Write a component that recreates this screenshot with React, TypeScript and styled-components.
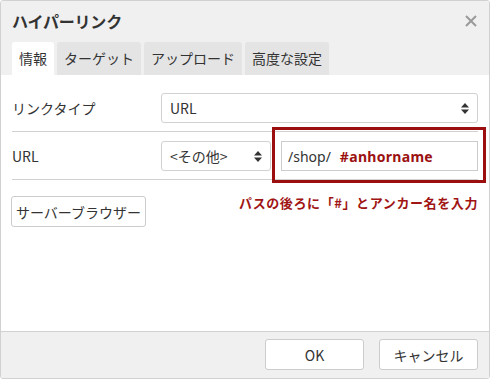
import React from 'react';
import styled, { createGlobalStyle } from 'styled-components';

const GlobalStyle = createGlobalStyle`
  html, body {
    margin: 0;
    padding: 0;
    background: #ffffff;
  }
  body {
    font-family: 'Noto Sans CJK JP', 'Noto Sans', sans-serif;
    color: #333333;
  }
`;

const Dialog = styled.div`
  width: 490px;
  height: 379px;
  box-sizing: border-box;
  border: 1px solid #d1d1d1;
  border-radius: 3px;
  display: flex;
  flex-direction: column;
  overflow: hidden;
  background: #ffffff;
`;

const Header = styled.div`
  background: #f0f0f0;
  display: flex;
  flex-direction: column;
`;

const TitleRow = styled.div`
  height: 41px;
  display: flex;
  align-items: center;
  justify-content: space-between;
  padding: 0 11px 0 11px;
`;

const Title = styled.div`
  font-size: 16px;
  font-weight: 700;
  color: #333333;
  letter-spacing: -0.2px;
  margin-top: -2px;
`;

const Close = styled.div`
  width: 14px;
  height: 14px;
  margin-top: -2px;
  display: flex;
`;

const Tabs = styled.div`
  display: flex;
  gap: 3px;
  padding: 0 11px;
  height: 33px;
  align-items: flex-end;
`;

const Tab = styled.div<{ $active?: boolean }>`
  height: 33px;
  box-sizing: border-box;
  padding: 0 7px 1px 7px;
  display: flex;
  align-items: center;
  font-size: 14px;
  color: #333333;
  background: ${(p) => (p.$active ? '#ffffff' : '#e4e4e4')};
  border-radius: 3px 3px 0 0;
`;

const Body = styled.div`
  flex: 1;
  position: relative;
  padding: 18px 11px 0 11px;
`;

const Row = styled.div<{ $line?: boolean }>`
  display: grid;
  grid-template-columns: 149px 1fr;
  align-items: center;
  padding: 0 0 8px 0;
  margin-bottom: 9px;
  border-bottom: ${(p) => (p.$line ? '1px solid #d1d1d1' : 'none')};
`;

const Label = styled.div`
  font-size: 14px;
  color: #333333;
`;

const Controls = styled.div`
  display: flex;
  gap: 10px;
  align-items: center;
`;

const Select = styled.div<{ $w?: number }>`
  height: 30px;
  box-sizing: border-box;
  ${(p) => (p.$w ? `width: ${p.$w}px;` : 'flex: 1;')}
  border: 1px solid #d1d1d1;
  border-radius: 3px;
  display: flex;
  align-items: center;
  justify-content: space-between;
  padding: 0 8px 0 8px;
  font-size: 14px;
  color: #333333;
  background: #ffffff;
`;

const Arrows = styled.svg`
  width: 8px;
  height: 11px;
`;

const TextInput = styled.div`
  flex: 1;
  height: 30px;
  box-sizing: border-box;
  border: 1px solid #cccccc;
  display: flex;
  align-items: center;
  padding: 0 6px;
  font-size: 14px;
  color: #333333;
  font-family: 'Noto Sans', 'Open Sans', sans-serif;
`;

const Anchor = styled.span`
  color: #9b1111;
  font-weight: 700;
  margin-left: 9px;
  letter-spacing: 0.3px;
`;

const Highlight = styled.div`
  position: absolute;
  left: 271px;
  top: 52px;
  width: 214px;
  height: 56px;
  box-sizing: border-box;
  border: 3px solid #9b0f0f;
  pointer-events: none;
`;

const BottomRow = styled.div`
  display: flex;
  justify-content: space-between;
  align-items: flex-start;
  margin-top: 16px;
  margin-left: -1px;
`;

const Button = styled.div<{ $w?: number }>`
  height: 31px;
  box-sizing: border-box;
  ${(p) => (p.$w ? `width: ${p.$w}px; justify-content: center;` : 'padding: 0 4px;')}
  border: 1px solid #cccccc;
  border-radius: 3px;
  background: #ffffff;
  display: flex;
  align-items: center;
  font-size: 14px;
  color: #333333;
`;

const Note = styled.div`
  font-size: 13px;
  font-weight: 700;
  color: #a01414;
  margin-top: -3px;
  letter-spacing: 0.6px;
`;

const Footer = styled.div`
  height: 47px;
  box-sizing: border-box;
  background: #f0f0f0;
  border-top: 1px solid #d1d1d1;
  display: flex;
  justify-content: flex-end;
  align-items: flex-start;
  gap: 15px;
  padding: 7px 11px 0 0;
`;

const SortArrows = () => (
  <Arrows viewBox="0 0 8 11">
    <path d="M4 0 L8 4.5 H0 Z" fill="#333" />
    <path d="M4 11 L8 6.5 H0 Z" fill="#333" />
  </Arrows>
);

const App: React.FC = () => {
  return (
    <>
      <GlobalStyle />
      <Dialog>
        <Header>
          <TitleRow>
            <Title>ハイパーリンク</Title>
            <Close>
              <svg width="14" height="14" viewBox="0 0 14 14">
                <path d="M2 2 L12 12 M12 2 L2 12" stroke="#9a9a9a" strokeWidth="2" />
              </svg>
            </Close>
          </TitleRow>
          <Tabs>
            <Tab $active>情報</Tab>
            <Tab>ターゲット</Tab>
            <Tab>アップロード</Tab>
            <Tab>高度な設定</Tab>
          </Tabs>
        </Header>
        <Body>
          <Row $line>
            <Label>リンクタイプ</Label>
            <Controls>
              <Select>
                <span>URL</span>
                <SortArrows />
              </Select>
            </Controls>
          </Row>
          <Row $line>
            <Label>URL</Label>
            <Controls>
              <Select $w={110}>
                <span>&lt;その他&gt;</span>
                <SortArrows />
              </Select>
              <TextInput>
                /shop/<Anchor>#anhorname</Anchor>
              </TextInput>
            </Controls>
          </Row>
          <BottomRow>
            <Button>サーバーブラウザー</Button>
            <Note>パスの後ろに「#」とアンカー名を入力</Note>
          </BottomRow>
          <Highlight />
        </Body>
        <Footer>
          <Button $w={99}>OK</Button>
          <Button $w={99}>キャンセル</Button>
        </Footer>
      </Dialog>
    </>
  );
};

export default App;
